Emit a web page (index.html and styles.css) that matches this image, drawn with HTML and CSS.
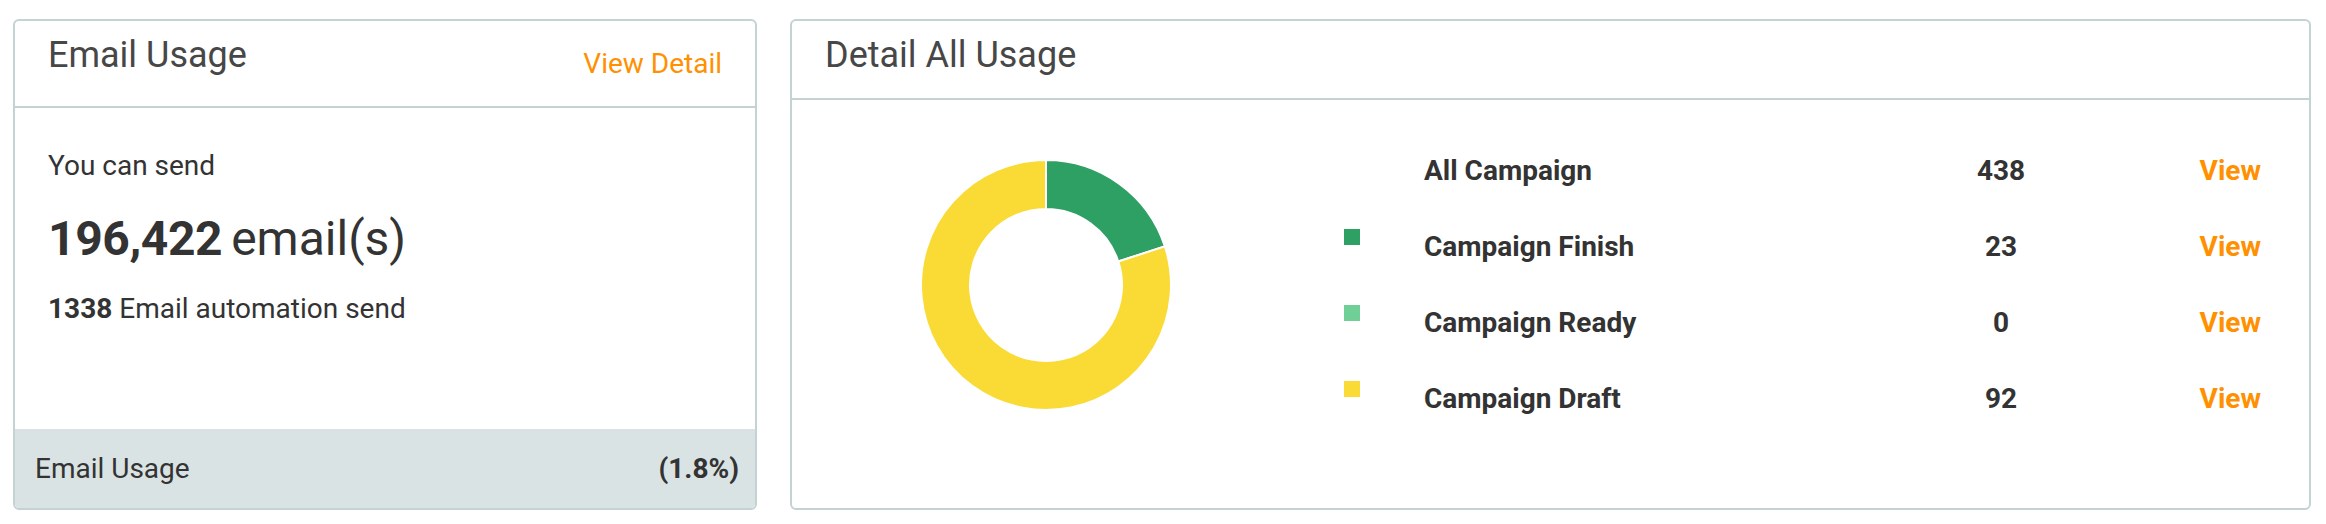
FILE: index.html
```html
<!DOCTYPE html>
<html lang="en">
<head>
    <meta charset="UTF-8">
    <title>Email Usage</title>
    <link rel="stylesheet" href="styles.css">
</head>
<body>
    <div class="dashboard">
        <div class="card usage-card">
            <div class="card-header">
                <h2>Email Usage</h2>
                <a href="#" class="link header-link">View Detail</a>
            </div>
            <div class="card-body usage-body">
                <p class="send-label">You can send</p>
                <p class="send-count"><strong>196,422</strong> email(s)</p>
                <p class="send-auto"><strong>1338</strong> Email automation send</p>
            </div>
            <div class="card-footer">
                <span>Email Usage</span>
                <strong>(1.8%)</strong>
            </div>
        </div>

        <div class="card detail-card">
            <div class="card-header">
                <h2>Detail All Usage</h2>
            </div>
            <div class="card-body detail-body">
                <!-- donut: finish 23 / ready 0 / draft 92 -->
                <svg class="donut" width="250" height="250" viewBox="0 0 250 250">
                    <path fill="#2fa064" stroke="#fff" stroke-width="2"
                          d="M125 0 A125 125 0 0 1 243.88 86.37 L197.28 101.51 A76 76 0 0 0 125 49 Z"/>
                    <path fill="#fadb36" stroke="#fff" stroke-width="2"
                          d="M243.88 86.37 A125 125 0 1 1 125 0 L125 49 A76 76 0 1 0 197.28 101.51 Z"/>
                </svg>

                <div class="legend">
                    <span></span>
                    <span class="legend-name">All Campaign</span>
                    <span class="legend-count">438</span>
                    <a href="#" class="link legend-link">View</a>

                    <span class="swatch finish"></span>
                    <span class="legend-name">Campaign Finish</span>
                    <span class="legend-count">23</span>
                    <a href="#" class="link legend-link">View</a>

                    <span class="swatch ready"></span>
                    <span class="legend-name">Campaign Ready</span>
                    <span class="legend-count">0</span>
                    <a href="#" class="link legend-link">View</a>

                    <span class="swatch draft"></span>
                    <span class="legend-name">Campaign Draft</span>
                    <span class="legend-count">92</span>
                    <a href="#" class="link legend-link">View</a>
                </div>
            </div>
        </div>
    </div>
</body>
</html>
```

FILE: styles.css
```css
body {
    font-family: Roboto, "Liberation Sans", sans-serif;
    margin: 0;
    padding: 19px 15px 0 13px;
    color: #333;
    background-color: #fff;
}

.dashboard {
    display: flex;
    gap: 33px;
}

.card {
    display: flex;
    flex-direction: column;
    height: 491px;
    box-sizing: border-box;
    border: 2px solid #c3d2d2;
    border-radius: 6px;
    overflow: hidden;
    background-color: #fff;
}

.usage-card {
    width: 744px;
}

.detail-card {
    flex: 1;
}

.card-header {
    display: flex;
    justify-content: space-between;
    align-items: flex-start;
    padding: 13px 33px 22px;
    border-bottom: 2px solid #c3d2d2;
}

.card-header h2 {
    margin: 0;
    font-size: 36px;
    line-height: 42px;
    font-weight: 400;
    color: #474747;
}

.link {
    color: #ff9000;
    text-decoration: none;
}

.header-link {
    margin-top: 9px;
    margin-bottom: -1px;
    font-size: 28px;
    line-height: 42px;
}

.card-body {
    flex: 1;
}

/* left card */
.usage-body {
    padding: 38px 33px 0;
}

.usage-body p {
    margin: 0;
}

.send-label {
    font-size: 28px;
    line-height: 40px;
}

.send-count {
    margin-top: 25px !important;
    font-size: 48px;
    line-height: 56px;
    word-spacing: -3px;
}

.send-count strong {
    letter-spacing: -0.4px;
}

.send-auto {
    margin-top: 22px !important;
    font-size: 28px;
    line-height: 40px;
}

.card-footer {
    display: flex;
    justify-content: space-between;
    height: 79px;
    padding: 0 16px 0 20px;
    background-color: #dae3e4;
    font-size: 28px;
    line-height: 79px;
}

/* right card */
.detail-body {
    display: flex;
    align-items: flex-start;
    padding: 33px 48px 0 129px;
}

.donut {
    flex: none;
    margin-top: 27px;
}

.legend {
    flex: 1;
    display: grid;
    grid-template-columns: 80px 1fr 200px 160px;
    grid-auto-rows: 76px;
    margin-left: 173px;
    font-size: 28px;
    line-height: 76px;
    font-weight: 700;
}

.legend-count {
    text-align: center;
}

.legend-link {
    text-align: right;
}

.swatch {
    width: 16px;
    height: 16px;
    margin-top: 20px;
}

.swatch.finish {
    background-color: #2fa064;
}

.swatch.ready {
    background-color: #6fcf97;
}

.swatch.draft {
    background-color: #fadb36;
}
```
